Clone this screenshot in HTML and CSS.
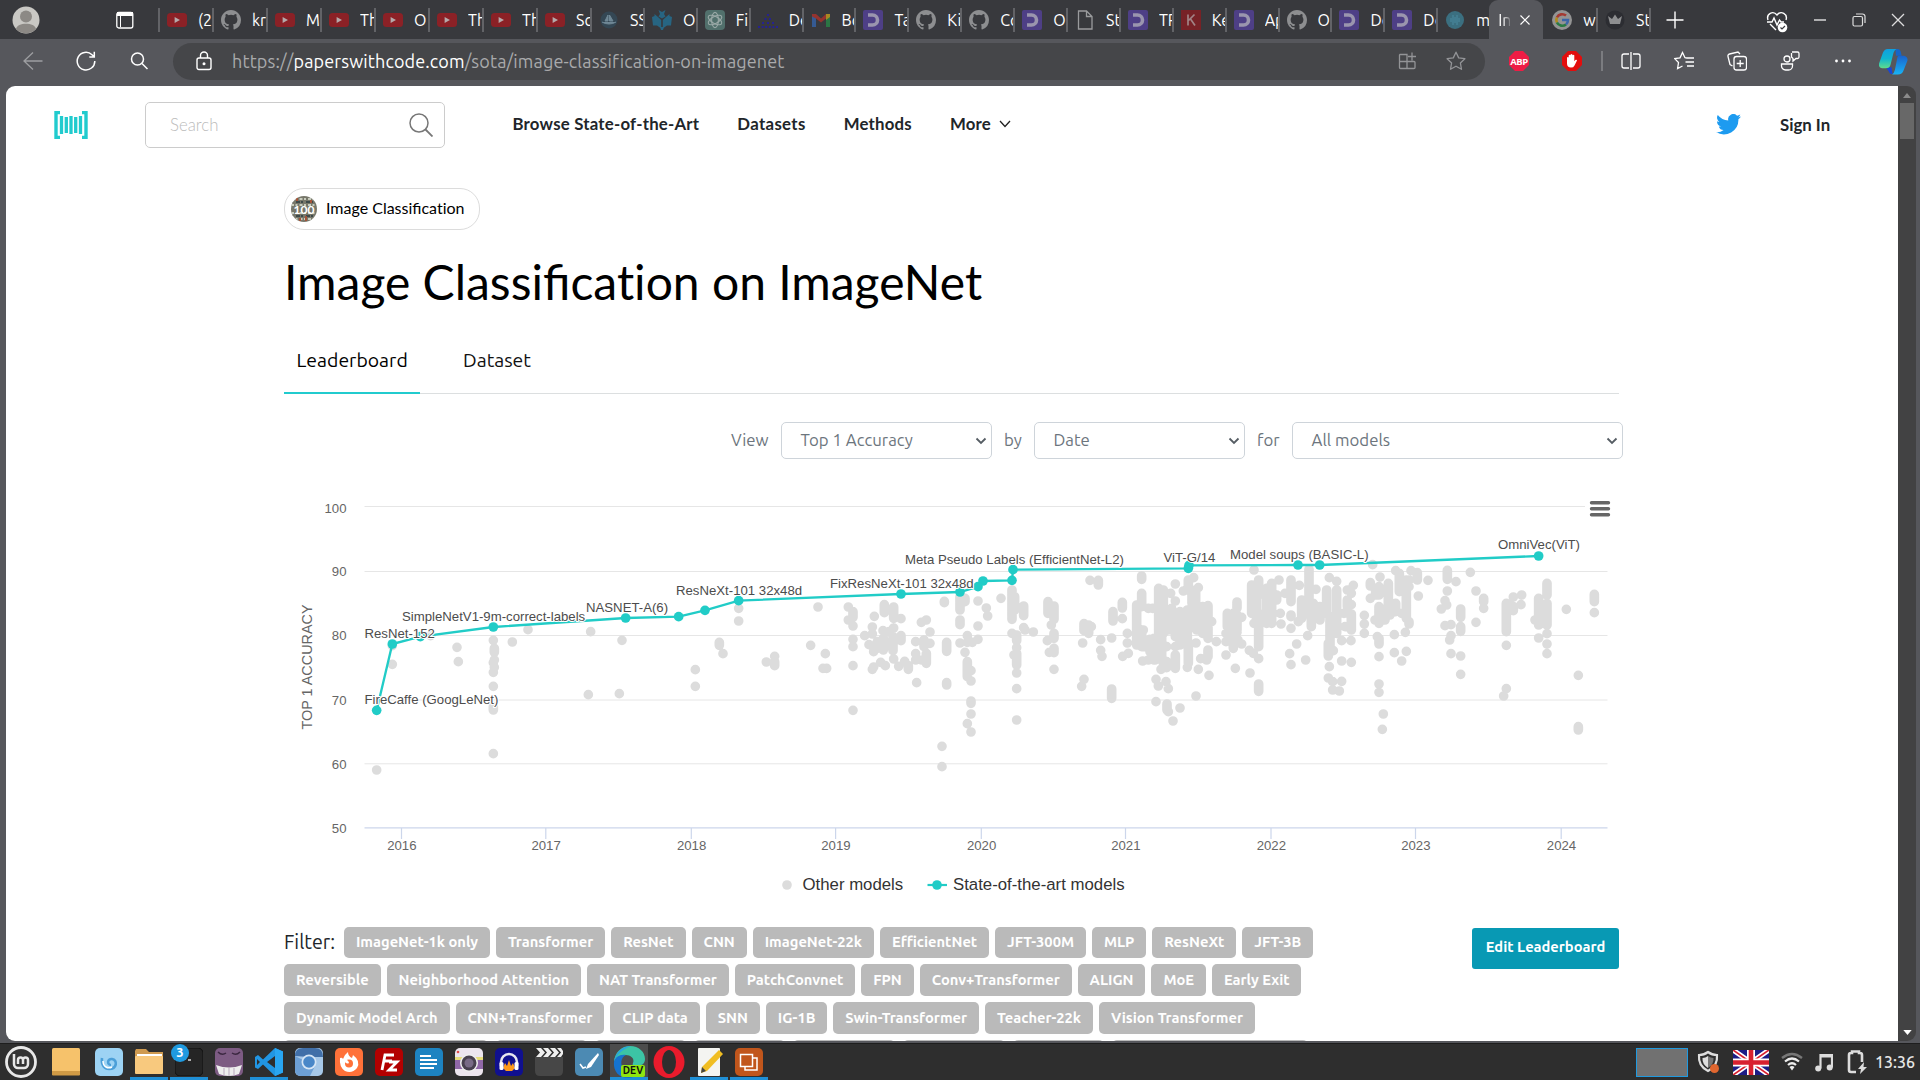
FILE: index.html
```html
<!DOCTYPE html>
<html lang="en">
<head>
<meta charset="utf-8">
<title>Image Classification on ImageNet</title>
<link rel="stylesheet" href="styles.css">
</head>
<body>
<svg class="defs" width="0" height="0">
  <symbol id="yt" viewBox="0 0 20 20"><rect y="3" width="20" height="14" rx="3.5" fill="#8b2126"/><path d="M7.6 7v6l5.4-3z" fill="#b5a9aa"/></symbol>
  <symbol id="gh" viewBox="0 0 16 16"><path fill="#8d8e90" d="M8 0C3.58 0 0 3.58 0 8c0 3.54 2.29 6.53 5.47 7.59.4.07.55-.17.55-.38 0-.19-.01-.82-.01-1.49-2.01.37-2.53-.49-2.69-.94-.09-.23-.48-.94-.82-1.13-.28-.15-.68-.52-.01-.53.63-.01 1.08.58 1.23.82.72 1.21 1.87.87 2.33.66.07-.52.28-.87.51-1.07-1.78-.2-3.64-.89-3.64-3.95 0-.87.31-1.59.82-2.15-.08-.2-.36-1.02.08-2.12 0 0 .67-.21 2.2.82a7.6 7.6 0 0 1 4 0c1.53-1.04 2.2-.82 2.2-.82.44 1.1.16 1.92.08 2.12.51.56.82 1.27.82 2.15 0 3.07-1.87 3.75-3.65 3.95.29.25.54.73.54 1.48 0 1.07-.01 1.93-.01 2.2 0 .21.15.46.55.38A8.01 8.01 0 0 0 16 8c0-4.42-3.58-8-8-8z"/></symbol>
  <symbol id="dd" viewBox="0 0 20 20"><rect width="20" height="20" rx="2" fill="#4e3f86"/><path d="M5 5h4.5a5 5 0 0 1 0 10H5" fill="none" stroke="#9a95ae" stroke-width="3.6"/></symbol>
  <symbol id="ship" viewBox="0 0 20 20"><circle cx="10" cy="10" r="8.500" fill="#344754"/><path d="M3 12q3 2 7 2t7-2M6 11l3-6v6zM10.500 11V5l3.500 6z" fill="#6f8795" stroke="#6f8795"/></symbol>
  <symbol id="book" viewBox="0 0 20 20"><path d="M0 7l2.500-1v-2L6 7l3.200 3v8.500L5 15.500H1zM20 7l-2.500-1v-2L14 7l-3.200 3v8.500l4.200-3h4z" fill="#276582"/><path d="M6.500 0l3.500 2 3.500-2-1.500 4 1.500 2.500L10 8.500 6.500 6.500 8 4zM8 17h4l-1 3H9z" fill="#276582"/></symbol>
  <symbol id="gpt" viewBox="0 0 20 20"><rect width="20" height="20" rx="4" fill="#51706c"/><g fill="none" stroke="#9aa9a7" stroke-width="1.1"><ellipse cx="10" cy="10" rx="3.400" ry="7.600"/><ellipse cx="10" cy="10" rx="3.400" ry="7.600" transform="rotate(60 10 10)"/><ellipse cx="10" cy="10" rx="3.400" ry="7.600" transform="rotate(120 10 10)"/></g></symbol>
  <symbol id="dots3" viewBox="0 0 20 20"><g fill="#252290"><path d="M9 4h2v2H9zM6.500 8h2v2h-2zM11 8h2v2h-2zM4 12h2v2H4zM9 12h2v2H9zM14 12h2v2h-2zM0 16h2v2H0zM3.600 16h2v2h-2zM7.200 16h2v2h-2zM10.800 16h2v2h-2zM14.400 16h2v2h-2zM18 16h2v2h-2z"/></g></symbol>
  <symbol id="gmail" viewBox="0 0 20 20"><path d="M1 4v13h4V8z" fill="#355a92"/><path d="M19 4v13h-4V8z" fill="#2b7544"/><path d="M1 4l4 0 5 4.500L15 4v4.500l-5 4-5-4-4-2z" fill="#95332e"/><path d="M15 4h4v3l-4 3z" fill="#a88922"/></symbol>
  <symbol id="page" viewBox="0 0 20 20"><path d="M3.500 1h8L17 6.500V19H3.500zM11.500 1v5.500H17" fill="none" stroke="#9a9b9d" stroke-width="1.3"/></symbol>
  <symbol id="kk" viewBox="0 0 20 20"><rect width="20" height="20" fill="#772226"/><path d="M7 4.500v11M13.500 4.500L7 11M9.500 9l4.500 6.500" fill="none" stroke="#a18385" stroke-width="1.7"/></symbol>
  <symbol id="teal" viewBox="0 0 20 20"><circle cx="10" cy="10" r="9" fill="#3b6f80"/><path d="M6 8v4M8 5v10M10 7v6M12 5v10M14 8v4" stroke="#4b8ba0" stroke-width="1"/></symbol>
  <symbol id="goog" viewBox="0 0 20 20"><circle cx="10" cy="10" r="10" fill="#949494"/><g fill="none" stroke-width="2.600"><path d="M4.900 7.500A6 6 0 0 1 14 5.600" stroke="#a43a32"/><path d="M4.900 12.500a6 6 0 0 1 0-5" stroke="#b08a1c"/><path d="M14 14.400a6 6 0 0 1-9.100-1.900" stroke="#2a7a43"/><path d="M10 10h6a6 6 0 0 1-2 4.400" stroke="#3c66a8"/></g></symbol>
  <symbol id="crown" viewBox="0 0 20 20"><circle cx="10" cy="10" r="9.500" fill="#2c2d32"/><path d="M3 6l4 3 3-4.500L13 9l4-3-2 8H5z" fill="#8d8e90"/></symbol>
</svg>

<header class="tabstrip">
  <svg class="avatar" viewBox="0 0 28 28"><circle cx="14" cy="14" r="13.500" fill="#c9c8c4"/><circle cx="14" cy="10.500" r="6" fill="#8c8985"/><path d="M4 23c1-7 19-7 20 0a13.500 13.500 0 0 1-20 0z" fill="#8c8985"/></svg>
  <svg class="workspace-btn" viewBox="0 0 18 18"><rect x=".8" y="1.500" width="16" height="15.500" rx="2" fill="none" stroke="#fff" stroke-width="1.300"/><path d="M1 1h16v4H1z" fill="#fff"/><path d="M4.500 5v11" stroke="#fff"/></svg>
  <nav class="tabs">
    <div class="tab"><svg><use href="#yt"/></svg><span>(2</span></div>
    <div class="tab"><svg><use href="#gh"/></svg><span>kr</span></div>
    <div class="tab"><svg><use href="#yt"/></svg><span>M</span></div>
    <div class="tab"><svg><use href="#yt"/></svg><span>Th</span></div>
    <div class="tab"><svg><use href="#yt"/></svg><span>O</span></div>
    <div class="tab"><svg><use href="#yt"/></svg><span>Th</span></div>
    <div class="tab"><svg><use href="#yt"/></svg><span>Th</span></div>
    <div class="tab"><svg><use href="#yt"/></svg><span>Sc</span></div>
    <div class="tab"><svg><use href="#ship"/></svg><span>SS</span></div>
    <div class="tab"><svg><use href="#book"/></svg><span>O</span></div>
    <div class="tab"><svg><use href="#gpt"/></svg><span>Fi</span></div>
    <div class="tab"><svg><use href="#dots3"/></svg><span>De</span></div>
    <div class="tab"><svg><use href="#gmail"/></svg><span>Bo</span></div>
    <div class="tab"><svg><use href="#dd"/></svg><span>Ta</span></div>
    <div class="tab"><svg><use href="#gh"/></svg><span>Ki</span></div>
    <div class="tab"><svg><use href="#gh"/></svg><span>Co</span></div>
    <div class="tab"><svg><use href="#dd"/></svg><span>O</span></div>
    <div class="tab"><svg><use href="#page"/></svg><span>St</span></div>
    <div class="tab"><svg><use href="#dd"/></svg><span>TR</span></div>
    <div class="tab"><svg><use href="#kk"/></svg><span>Ke</span></div>
    <div class="tab"><svg><use href="#dd"/></svg><span>Ap</span></div>
    <div class="tab"><svg><use href="#gh"/></svg><span>O</span></div>
    <div class="tab"><svg><use href="#dd"/></svg><span>De</span></div>
    <div class="tab"><svg><use href="#dd"/></svg><span>De</span></div>
    <div class="tab"><svg><use href="#teal"/></svg><span>m</span></div>
    <div class="tab active"><span>In</span><svg viewBox="0 0 12 12"><path d="M1.500 1.500l9 9M10.500 1.500l-9 9" stroke="#fff" stroke-width="1.200"/></svg></div>
    <div class="tab"><svg><use href="#goog"/></svg><span>w</span></div>
    <div class="tab"><svg><use href="#crown"/></svg><span>St</span></div>
  </nav>
  <svg class="plus" viewBox="0 0 18 18"><path d="M9 .5v17M.5 9h17" stroke="#fff" stroke-width="1.400"/></svg>
  <svg class="heart" viewBox="0 0 22 22"><path d="M2 9C0 3 7-1 11 4c4-5 11-1 9 5M1 11h5l2-4 3 7 2.500-5 1.500 2h3M4 13l6 6" fill="none" stroke="#fff" stroke-width="1.400"/><circle cx="16.500" cy="16.500" r="4.800" fill="#fff"/><path d="M14.500 16.500l1.500 1.500 3-3" fill="none" stroke="#38393d" stroke-width="1.200"/></svg>
  <div class="winbtns">
    <svg viewBox="0 0 14 14"><path d="M1 7h12" stroke="#fff" stroke-width="1.200"/></svg>
    <svg viewBox="0 0 14 14"><rect x="1" y="3.500" width="9.500" height="9.500" rx="1.500" fill="none" stroke="#ddd" stroke-width="1.200"/><path d="M4 1h6.500A2.500 2.500 0 0 1 13 3.500V10" fill="none" stroke="#ddd" stroke-width="1.200"/></svg>
    <svg viewBox="0 0 14 14"><path d="M1 1l12 12M13 1L1 13" stroke="#ddd" stroke-width="1.300"/></svg>
  </div>
</header>

<div class="toolbar">
  <div class="tb"><svg viewBox="0 0 20 20"><path d="M19.500 10H1M10 1.500L1 10l9 8.500" fill="none" stroke="#9d9ea1" stroke-width="1.300"/></svg></div>
  <div class="tb"><svg viewBox="0 0 20 20"><path d="M18.800 10A8.800 8.800 0 1 1 16 3.700l2 2M18.300.8v5.200h-5" fill="none" stroke="#fff" stroke-width="1.500"/></svg></div>
  <div class="tb"><svg viewBox="0 0 20 20"><circle cx="8.500" cy="8" r="6" fill="none" stroke="#fff" stroke-width="1.500"/><path d="M13 12.500l5.500 5.500" stroke="#fff" stroke-width="1.500"/></svg></div>
  <div class="address">
    <svg class="lock" viewBox="0 0 16 20"><rect x="1" y="7" width="14" height="11.500" rx="2" fill="none" stroke="#fff" stroke-width="1.400"/><path d="M4.500 7V4.500a3.500 3.500 0 0 1 7 0V7" fill="none" stroke="#fff" stroke-width="1.400"/><circle cx="8" cy="12.700" r="1.500" fill="#fff"/></svg>
    <div class="url">https://<b>paperswithcode.com</b>/sota/image-classification-on-imagenet</div>
    <svg class="ai" viewBox="0 0 20 20"><path d="M2 3.500h7v14H2.500a1 1 0 0 1-1-1V4zM1.500 10.500h14.500a1 1 0 0 1 1 1v5a1 1 0 0 1-1 1H9M14 1.500v8M10 5.500h8" fill="none" stroke="#939497" stroke-width="1.300"/></svg>
    <svg class="ai" viewBox="0 0 20 20"><path d="M10 1.200l2.700 5.700 6.200.8-4.500 4.300 1.100 6.300L10 15.200l-5.500 3.100 1.100-6.300L1.100 7.700l6.200-.8z" fill="none" stroke="#939497" stroke-width="1.300" stroke-linejoin="round"/></svg>
  </div>
  <div class="tb"><svg viewBox="0 0 20 20"><path d="M6 0h8l6 6v8l-6 6H6l-6-6V6z" fill="#ee1d45"/><text x="10" y="13.500" text-anchor="middle" class="abp">ABP</text></svg></div>
  <div class="tb"><svg viewBox="0 0 20 20"><path d="M6 0h8l6 6v8l-6 6H6l-6-6V6z" fill="#e30d0d"/><path d="M5 10.500V6.500q.9-1 1.700 0V4.300q.9-1 1.800 0V3.500q1-1 1.900 0v.8q1-1 1.900 0v6l1.400-1.500q1.200-.4 1.300.6l-2.500 5q-1 2.200-3.500 2.200-4 0-4-4z" fill="#fff"/></svg></div>
  <i class="sep"></i>
  <div class="tb"><svg viewBox="0 0 20 20"><path d="M8 3H3a2 2 0 0 0-2 2v10a2 2 0 0 0 2 2h5M12 3h5a2 2 0 0 1 2 2v10a2 2 0 0 1-2 2h-5M10 1v18" fill="none" stroke="#fff" stroke-width="1.300"/></svg></div>
  <div class="tb"><svg viewBox="0 0 20 20"><path d="M13 7l-2-.3L8.500 1.500 6 6.800l-5.300.8L4.500 11.500l-.9 6L8.500 15M12 7h8M11.500 11H20M13 15h7" fill="none" stroke="#fff" stroke-width="1.300"/></svg></div>
  <div class="tb"><svg viewBox="0 0 20 20"><rect x="7" y="5.500" width="12.500" height="13.500" rx="2.500" fill="none" stroke="#fff" stroke-width="1.300"/><path d="M13.200 9v7M9.700 12.500h7M5.500 15L3 13.500 1 5.500a2 2 0 0 1 1.500-2.500L11 1l2 2" fill="none" stroke="#fff" stroke-width="1.300"/></svg></div>
  <div class="tb"><svg viewBox="0 0 20 20"><circle cx="7" cy="8" r="3" fill="none" stroke="#fff" stroke-width="1.300"/><path d="M1.500 13h11v2a4 4 0 0 1-4 4h-3a4 4 0 0 1-4-4zM12 1h5.500a1.500 1.500 0 0 1 1.500 1.500V6a1.500 1.500 0 0 1-1.500 1.500H16L13 10V7.500L11.500 6V2" fill="none" stroke="#fff" stroke-width="1.300"/></svg></div>
  <div class="tb"><svg viewBox="0 0 20 20"><circle cx="3.500" cy="10" r="1.400" fill="#fff"/><circle cx="10" cy="10" r="1.400" fill="#fff"/><circle cx="16.500" cy="10" r="1.400" fill="#fff"/></svg></div>
  <div class="tb copilot"><svg viewBox="0 0 30 28">
    <defs><linearGradient id="cg" x1="0" y1="0" x2="0" y2="1"><stop offset="0" stop-color="#0f9fe0"/><stop offset=".5" stop-color="#0fb5d0"/><stop offset="1" stop-color="#5fdc8b"/></linearGradient><linearGradient id="cb" x1="0" y1="0" x2="0" y2="1"><stop offset="0" stop-color="#1a62cc"/><stop offset="1" stop-color="#18b4f5"/></linearGradient></defs>
    <path d="M17 1h2q3 0 3.500 3l1 4h-6z" fill="#1565c8"/><path d="M7 20h6l1 7q-3 0-4-3z" fill="#1946d6"/>
    <path d="M9 1h9q-2 1-3 4l-3 12q-1 4-5 4H3q-4-1-3-5L4 5q1.500-4 5-4z" fill="url(#cg)"/><path d="M20 8h6q4 1 3.500 5l-4 10q-1.500 4.500-6 4.500h-6q2-1 3-5l2-10q.5-4 1.500-4.500z" fill="url(#cb)"/></svg></div>
</div>

<div class="viewport">
  <main class="page">
    <div class="topnav">
      <svg class="logo" viewBox="0 0 34 28"><path d="M6 1.500H2v25h4M28 1.500h4v25h-4" fill="none" stroke="#21cbce" stroke-width="3.400"/><path d="M7.500 5v18M12.300 6v16M17 5v18M21.700 6v16M26.500 5v18" stroke="#21cbce" stroke-width="3.300"/></svg>
      <div class="search"><span>Search</span><svg viewBox="0 0 24 24"><circle cx="10" cy="10" r="9" fill="none" stroke="#777" stroke-width="1.500"/><path d="M16.500 16.500l7 7" stroke="#777" stroke-width="1.800"/></svg></div>
      <nav class="links"><a>Browse State-of-the-Art</a><a>Datasets</a><a>Methods</a><a>More<svg viewBox="0 0 12 8"><path d="M1 1l5 5.500L11 1" fill="none" stroke="#222" stroke-width="1.300"/></svg></a></nav>
      <svg class="twitter" viewBox="0 0 24 20"><path fill="#1d9bf0" d="M24 2.400a9.800 9.800 0 0 1-2.800.8A4.900 4.900 0 0 0 23.300.4a9.900 9.900 0 0 1-3.100 1.200 4.900 4.900 0 0 0-8.400 4.500A14 14 0 0 1 1.700.9a4.900 4.900 0 0 0 1.500 6.600 4.900 4.900 0 0 1-2.200-.6A4.900 4.900 0 0 0 4.900 11.800a5 5 0 0 1-2.200.1 4.900 4.900 0 0 0 4.600 3.400A9.900 9.900 0 0 1 0 17.300 14 14 0 0 0 21.500 4.900 10 10 0 0 0 24 2.400z"/></svg>
      <a class="signin">Sign In</a>
    </div>

    <div class="content">
      <a class="task-pill"><svg viewBox="0 0 26 26"><clipPath id="pc"><circle cx="13" cy="13" r="13"/></clipPath><g clip-path="url(#pc)"><rect width="26" height="26" fill="#77776a"/><path d="M0 3h26M0 9h26M0 17h26M0 23h26" stroke="#c8ccbd" stroke-width="2.200" stroke-dasharray="3 1.500 2 2"/><path d="M0 6h26M0 20h26" stroke="#3e4a4a" stroke-width="2" stroke-dasharray="2 3 4 1"/><path d="M6 1v4M15 20v5M20 4v3M9 22v3" stroke="#a55338" stroke-width="2"/><text x="13" y="17.500" text-anchor="middle" class="hundred">100</text></g></svg><span>Image Classificat&zwnj;ion</span></a>
      <h1>Image Classificat&zwnj;ion on ImageNet</h1>
      <div class="view-tabs"><a class="on">Leaderboard</a><a>Dataset</a></div>
      <div class="controls">
        <label>View</label><div class="select">Top 1 Accuracy<svg viewBox="0 0 12 8"><path d="M1.500 1.500L6 6l4.500-4.500"/></svg></div>
        <label>by</label><div class="select">Date<svg viewBox="0 0 12 8"><path d="M1.500 1.500L6 6l4.500-4.500"/></svg></div>
        <label>for</label><div class="select wide">All models<svg viewBox="0 0 12 8"><path d="M1.500 1.500L6 6l4.500-4.500"/></svg></div>
      </div>
      <svg id="chart" class="chart" width="1350" height="430" viewBox="4 0 1350 430"></svg>
      <div class="bottom">
        <div class="filters">
          <div class="row r1"><span class="lead">Filter:</span><b>ImageNet-1k only</b><b>Transformer</b><b>ResNet</b><b>CNN</b><b>ImageNet-22k</b><b>EfficientNet</b><b>JFT-300M</b><b>MLP</b><b>ResNeXt</b><b>JFT-3B</b></div>
          <div class="row r2"><b>Reversible</b><b>Neighborhood Attention</b><b>NAT Transformer</b><b>PatchConvnet</b><b>FPN</b><b>Conv+Transformer</b><b>ALIGN</b><b>MoE</b><b>Early Exit</b></div>
          <div class="row r3"><b>Dynamic Model Arch</b><b>CNN+Transformer</b><b>CLIP data</b><b>SNN</b><b>IG-1B</b><b>Swin-Transformer</b><b>Teacher-22k</b><b>Vision Transformer</b></div>
          <div class="row r4"><i></i><i></i><i></i><i></i><i></i><i></i><i></i><i></i></div>
        </div>
        <a class="edit">Edit Leaderboard</a>
      </div>
    </div>
  </main>
  <aside class="scrollbar"><svg viewBox="0 0 10 6"><path d="M0 6L5 0l5 6z" fill="#8b8b8b"/></svg><div class="thumb"></div><svg class="down" viewBox="0 0 10 6"><path d="M0 0l5 6 5-6z" fill="#fff"/></svg></aside>
</div>

<footer class="taskbar">
  <div class="app mint"><svg viewBox="0 0 32 32"><circle cx="16" cy="16" r="14.500" fill="#333" stroke="#e8e8e8" stroke-width="2.800"/><path d="M9 8v10a4 4 0 0 0 4 4h6a4 4 0 0 0 4-4v-4a2.500 2.500 0 0 0-5 0v4M18 14a2.500 2.500 0 0 0-5 0v4" fill="none" stroke="#e8e8e8" stroke-width="2.500"/></svg></div>
  <div class="app first"><svg viewBox="0 0 28 28"><rect width="28" height="27" rx="1.500" fill="#f6c26b"/><path d="M0 23h28v3.500q0 1-1 1H1q-1 0-1-1z" fill="#d09a45"/></svg></div>
  <div class="app gap"><svg viewBox="0 0 28 28"><rect width="28" height="28" rx="5" fill="#9dd3f4"/><path d="M7 10c-1 8 3 11 7 11 8 0 9-9 3-10-5-.5-5 6-1 6" fill="none" stroke="#4b9fd8" stroke-width="2.600"/><path d="M8 13c0 6 5 8 9 6" fill="none" stroke="#fff" stroke-width="1.500"/></svg></div>
  <div class="app run"><svg viewBox="0 0 28 28"><path d="M0 3l1-2h10l3 3h14v8H0z" fill="#cf9a50"/><rect x="2" y="6" width="25" height="6" fill="#fff"/><rect y="8" width="28" height="18" rx="1" fill="#f8c97e"/></svg></div>
  <div class="app run badge"><svg viewBox="0 0 28 28"><rect width="28" height="28" rx="5" fill="#252525" stroke="#111"/><path d="M13 12h3" stroke="#ddd" stroke-width="1.500"/></svg><em>3</em></div>
  <div class="app"><svg viewBox="0 0 28 28"><rect width="28" height="28" rx="5" fill="#7d5b83"/><path d="M1 17q13 5 26 0l-3 9q-10 4-20 0z" fill="#eee"/><path d="M9 20v7M14 20v8M19 20v7" stroke="#b9a9bd" stroke-width="1"/><path d="M3 4q4 4 8 1M25 4q-4 4-8 1" fill="none" stroke="#3b2740" stroke-width="1.500"/></svg></div>
  <div class="app run"><svg viewBox="0 0 28 28"><path d="M20 0l8 3.500v21L20 28 8 16.500 3 21l-3-1.500V9L3 7l5 4.500z" fill="#2196e3"/><path d="M20 8v12l-8-6zM2 11l3 3-3 3z" fill="#2e2e2e"/><path d="M20 0l8 3.500v21L20 28z" fill="#29a6f2"/></svg></div>
  <div class="app"><svg viewBox="0 0 28 28"><rect width="28" height="28" rx="5" fill="#a7c8e8"/><path d="M0 8Q0 0 8 0h12q8 0 8 9H14z" fill="#416fa8"/><path d="M0 8v15q1 5 6 5h9l5-10z" fill="#6d9fd4"/><circle cx="14" cy="14" r="7.500" fill="#d7e6f5"/><circle cx="14" cy="14" r="5.800" fill="#4987c8"/></svg></div>
  <div class="app"><svg viewBox="0 0 28 28"><rect width="28" height="28" rx="5" fill="#ff7139"/><path d="M5 10q2-1 3 1 1-4 5-7 0 4 4 6l1-3q8 6 4 13-5 6-12 3-6-4-5-13z" fill="#fff"/><circle cx="14" cy="15.500" r="4" fill="#ff7139"/><path d="M9 12q4-1 5 3-3 2-5-3z" fill="#fff"/></svg></div>
  <div class="app"><svg viewBox="0 0 28 28"><rect width="28" height="28" rx="5" fill="#b30000"/><path d="M7 22l3-15h9M9 13h8M14 14h8l-8 8h8" fill="none" stroke="#fff" stroke-width="2.800"/></svg></div>
  <div class="app"><svg viewBox="0 0 28 28"><rect width="28" height="28" rx="5" fill="#1d83c1"/><path d="M5 8h11M5 12h17M5 16h17M5 20h14" stroke="#fff" stroke-width="2"/></svg></div>
  <div class="app"><svg viewBox="0 0 28 28"><rect width="28" height="28" rx="5" fill="#ece5ee"/><path d="M0 9h28v3H0z" fill="#e5dc7a"/><path d="M0 12h28v9H0z" fill="#9068a8"/><circle cx="14" cy="15" r="9" fill="#eee"/><circle cx="14" cy="15" r="7.500" fill="#48404f"/><circle cx="14" cy="15" r="4.500" fill="#786a86"/><circle cx="3" cy="4" r="1.300" fill="#e04c4c"/></svg></div>
  <div class="app"><svg viewBox="0 0 28 28"><rect width="28" height="28" rx="5" fill="#10108f"/><path d="M6 18V14a8 8 0 0 1 16 0v4" fill="none" stroke="#e6e6ee" stroke-width="2.500"/><path d="M8 20l2-5 2 3 2-6 2 6 2-3 2 5-3 3h-6z" fill="#ff9a1a"/><rect x="4.500" y="14" width="4" height="8" rx="1.500" fill="#fff"/><rect x="19.500" y="14" width="4" height="8" rx="1.500" fill="#fff"/></svg></div>
  <div class="app"><svg viewBox="0 0 28 28"><path d="M0 9h28v14q0 5-5 5H5q-5 0-5-5z" fill="#474747"/><path d="M1 0h5l4 4.500L6 9H1l4-4.500zM8 0h5l4 4.500L13 9H8l4-4.500zM15 0h5l4 4.500L20 9h-5l4-4.500zM22 0h4l2 3v3l-2 3h-4l4-4.500z" fill="#eee"/></svg></div>
  <div class="app"><svg viewBox="0 0 28 28"><rect width="28" height="28" rx="5" fill="#4c8ab3"/><path d="M23 5L13 16l-2 5 5-2 8-12z" fill="#fff"/><path d="M5 16l3 4 3-1" fill="none" stroke="#fff" stroke-width="1.500"/></svg></div>
  <div class="app run focus"><svg viewBox="0 0 32 32"><path d="M1 17C1 6 9 0 17 0c9 0 15 6 15 13 0 5-4 7-8 7s-5-1-4-3c2-5-3-8-7-8C7 9 2 12 1 17z" fill="#3cc4a5"/><path d="M1 16c1-5 6-8 12-7-5 2-7 10-1 16 4 3 8 4 12 3-3 3-6 4-9 4C6 32 0 25 1 16z" fill="#1573cf"/><path d="M1 15C3 5 11 0 18 0 8 4 4 9 1 15z" fill="#2aa5e0"/></svg><em>DEV</em></div>
  <div class="app"><svg viewBox="0 0 32 32"><ellipse cx="16" cy="16" rx="15.500" ry="16" fill="#ea1b2c"/><ellipse cx="16" cy="16" rx="7" ry="12" fill="#2e2e2e"/></svg></div>
  <div class="app run"><svg viewBox="0 0 28 28"><rect x="3" width="22" height="28" rx="1" fill="#f4f4f1"/><path d="M24 2l4 4L12 23l-6 2 1-6z" fill="#f0bd22"/><path d="M7 19l4 4-5 2z" fill="#444"/></svg></div>
  <div class="app run"><svg viewBox="0 0 28 28"><rect width="28" height="28" rx="5" fill="#c1561c"/><rect x="5.500" y="6.500" width="12" height="12" fill="none" stroke="#fff" stroke-width="1.500"/><path d="M18 10h4v12H10v-3" fill="none" stroke="#fff" stroke-width="1.500"/></svg></div>
  <div class="tray">
    <i class="desk"></i>
    <svg class="t-shield" viewBox="0 0 24 24"><path d="M12 2q4 3 9 3 1 11-9 16Q2 16 3 5q5 0 9-3z" fill="none" stroke="#ddd" stroke-width="2.200"/><path d="M12 6v12Q6 14 6.500 8q3 0 5.500-2z" fill="#ddd"/><path d="M12 6v12q6-4 5.500-10-3 0-5.500-2z" fill="#777"/><circle cx="18.500" cy="18.500" r="4.500" fill="#e0662f"/></svg>
    <svg class="t-flag" viewBox="0 0 36 25"><rect width="36" height="25" fill="#1c1c86"/><path d="M0 0l36 25M36 0L0 25" stroke="#fff" stroke-width="5"/><path d="M0 0l36 25M36 0L0 25" stroke="#d8202f" stroke-width="1.700"/><path d="M18 0v25M0 12.500h36" stroke="#fff" stroke-width="8"/><path d="M18 0v25M0 12.500h36" stroke="#d8202f" stroke-width="4.600"/></svg>
    <svg class="t-wifi" viewBox="0 0 22 20"><path d="M1 6q10-8 20 0" fill="none" stroke="#777" stroke-width="2.400"/><path d="M4 9.500q7-6 14 0M7 13q4-3.500 8 0" fill="none" stroke="#eee" stroke-width="2.200"/><path d="M8.500 15q2.500-2 5 0L11 18.500z" fill="#eee"/></svg>
    <svg class="t-music" viewBox="0 0 18 18"><path d="M5.500 15V1.500h11.500V14M5 3h12" fill="none" stroke="#ddd" stroke-width="2.200"/><circle cx="3.200" cy="15" r="3" fill="#ddd"/><circle cx="14.700" cy="14" r="3" fill="#ddd"/></svg>
    <svg class="t-batt" viewBox="0 0 20 24"><path d="M9 22H4q-2 0-2-2V5q0-2 2-2h1V1.500h7V3h1q2 0 2 2v7" fill="none" stroke="#ddd" stroke-width="2.600"/><path d="M17 12l-6 7h3l-1 5 7-7h-3.500z" fill="#ddd"/></svg>
    <span class="clock">13:36</span>
  </div>
</footer>
<script src="chart.js"></script>
</body>
</html>
```
FILE: styles.css
```css
* { box-sizing: border-box; }
body { margin: 0; width: 1920px; height: 1080px; overflow: hidden; display: flex; flex-direction: column; background: #56575c; font-family: Ubuntu, "Noto Sans", sans-serif; }
.defs { display: none; }
svg { display: block; flex: none; }

.tabstrip { height: 39px; flex: none; display: flex; align-items: center; background: #38393d; }
.avatar { width: 28px; height: 28px; margin-left: 12px; }
.workspace-btn { width: 18px; height: 18px; margin-left: 76px; }
.tabs { display: flex; margin-left: 24px; align-self: stretch; align-items: center; }
.tab { flex: none; width: 52.900px; height: 24px; display: flex; align-items: center; padding-left: 7px; gap: 11px; border-left: 2px solid #626367; color: #fff; font-size: 16px; }
.tab:nth-child(-n+8) { width: 54px; }
.tab svg { width: 20px; height: 20px; }
.tab span { flex: 1; overflow: hidden; white-space: nowrap; line-height: 24px; }
.tab:last-child { border-right: 2px solid #626367; width: 55px; }
.tab.active { width: 54px; height: 39px; background: #56575c; border: 0; border-radius: 9px 9px 0 0; gap: 8px; padding-left: 9px; padding-right: 13px; }
.tab.active + .tab { border-color: transparent; }
.tab.active span { flex: none; width: 12px; -webkit-mask-image: linear-gradient(90deg, #000 40%, rgba(0,0,0,.2)); mask-image: linear-gradient(90deg, #000 40%, rgba(0,0,0,.2)); }
.tab.active svg { width: 12px; height: 12px; margin-left: 1px; }
.plus { width: 18px; height: 18px; margin-left: 15px; }
.heart { width: 22px; height: 22px; margin-left: 82px; margin-top: 4px; }
.winbtns { display: flex; gap: 25px; margin-left: 25px; }
.winbtns svg { width: 14px; height: 14px; }

.toolbar { height: 47px; flex: none; display: flex; align-items: center; padding: 0 0 3px 6.5px; }
.tb { width: 53px; display: flex; justify-content: center; }
.tb svg { width: 20px; height: 20px; }
.tb.copilot { width: 47px; }
.tb.copilot svg { width: 29px; height: 27px; }
.address { width: 1312px; height: 37px; margin: 0 7.5px; border-radius: 19px; background: #454649; display: flex; align-items: center; padding: 0 19px 0 23px; }
.lock { width: 16px; height: 20px; }
.url { flex: 1; margin-left: 20px; color: #a9aaac; font-size: 18px; letter-spacing: .14px; white-space: nowrap; }
.url b { color: #fff; font-weight: 400; }
.ai { width: 20px; height: 20px; margin-left: 28px; }
.sep { width: 2px; height: 20px; background: #7b7c80; margin: 0 1.500px 0 2.500px; }
.abp { font: bold 9.500px "Open Sans", sans-serif; letter-spacing: -.4px; fill: #fff; }

.viewport { height: 955px; flex: none; margin: 0 4px 0 6px; display: flex; border-radius: 9px; overflow: hidden; }
.page { width: 1892px; background: #fff; overflow: hidden; }
.scrollbar { width: 18px; background: #424243; display: flex; flex-direction: column; align-items: center; padding: 7px 0 6px; }
.scrollbar svg { width: 8px; height: 5px; }
.thumb { width: 14px; height: 36px; margin-top: 5px; background: #686868; }
.scrollbar .down { margin-top: auto; width: 9px; }

.topnav { height: 77px; display: flex; align-items: center; padding-left: 48px; font: bold 16.800px Lato, sans-serif; color: #212529; }
.logo { width: 34px; height: 28px; }
.search { width: 300px; height: 46px; margin-left: 57px; border: 1px solid #ccc; border-radius: 5px; display: flex; align-items: center; justify-content: space-between; padding: 0 11px 0 24px; color: #bbb; font-weight: 300; }
.search svg { width: 24px; height: 24px; }
.links { display: flex; gap: 38px; margin: -2px 0 0 67.500px; letter-spacing: .22px; }
.links a { display: flex; align-items: center; white-space: nowrap; }
.links a:nth-child(2) { letter-spacing: .35px; }
.links a svg { width: 12px; height: 8px; margin-left: 7.500px; }
.twitter { width: 25px; height: 21px; margin: -1px 0 0 auto; }
.signin { width: 52px; margin: 0 66px 0 39px; white-space: nowrap; }

.content { padding-left: 278px; display: flex; flex-direction: column; align-items: flex-start; }
.task-pill { margin-top: 25px; width: 196px; height: 42px; border: 1px solid #dcdcdc; border-radius: 20px; display: flex; align-items: center; gap: 9px; padding-left: 6px; font: 16px Lato, sans-serif; color: #000; white-space: nowrap; }
.task-pill span { margin-top: -3px; }
.task-pill svg { width: 26px; height: 26px; }
.hundred { font: bold 12px Lato, sans-serif; fill: #fff; }
h1 { margin: 22px 0 0; font: 400 48px/60px Lato, sans-serif; color: #000; white-space: nowrap; }
.view-tabs { display: flex; width: 1335px; height: 82px; border-bottom: 1px solid #dcdfe0; font-size: 19.400px; color: #111; }
.view-tabs a { height: 82px; padding: 35px 12.500px 0; width: 136px; line-height: 26px; margin-right: 30.500px; }
.view-tabs a.on { border-bottom: 2px solid #21cbce; color: #000; }
.controls { display: flex; align-items: center; height: 37px; margin: 28px 0 0 447px; color: #6c757d; font-size: 16.800px; }
.controls > * { flex: none; }
.controls label { width: 50px; margin-top: -2px; white-space: nowrap; }
.controls label:nth-of-type(2) { width: 42px; padding-left: 12px; }
.controls label:nth-of-type(3) { width: 47px; padding-left: 12px; }
.select { width: 211px; height: 37px; border: 1px solid #ced4da; border-radius: 5px; display: flex; align-items: center; justify-content: space-between; padding: 0 4px 2px 18.500px; }
.select.wide { width: 331px; }
.select svg { width: 12px; height: 8px; margin-top: 2px; fill: none; stroke: #555c63; stroke-width: 1.800; }

.chart { margin-top: 21px; font-family: "Liberation Sans", Arial, sans-serif; }
.grid { stroke: #e6e6e6; stroke-width: 1; }
.axis { stroke: #ccd6eb; stroke-width: 1.200; }
.dots { stroke: #dcdcdc; stroke-width: 29; stroke-linecap: round; fill: none; }
.sota { stroke: #21ccc7; fill: none; }
.knot { fill: #21ccc7; }
.tick { font-size: 13.200px; fill: #666; }
.axis-title { font-size: 14.400px; fill: #666; }
.name { font-size: 13.200px; fill: #4c4c4c; stroke: #fff; stroke-width: 2px; paint-order: stroke; stroke-linejoin: round; }
.legend { font-size: 16.800px; fill: #333; }

.bottom { display: flex; align-items: flex-start; width: 1335px; justify-content: space-between; margin-top: 17px; }
.filters { display: flex; flex-direction: column; gap: 6px; }
.row { display: flex; gap: 6px; white-space: nowrap; }
.row b { height: 32px; line-height: 31px; padding: 0 11.950px; border-radius: 5px; background: #bababa; color: #fff; font-size: 14.700px; font-weight: 700; }
.r1 b { height: 31px; line-height: 30px; }
.lead { font-size: 19.700px; line-height: 31px; width: 54px; color: #212529; }
.row.r4 { gap: 8px; }
.row i { height: 20px; border-radius: 5px; background: #bababa; width: 91px; }
.row i:nth-child(1) { width: 204px; }
.row i:nth-child(5), .row i:nth-child(6) { width: 102px; }
.row i:nth-child(8) { width: 196px; }
.edit { width: 147px; height: 41px; margin-top: 1px; border-radius: 3px; background: #0899b4; color: #fff; font-size: 14.700px; font-weight: 700; line-height: 37px; text-align: center; white-space: nowrap; }

.taskbar { height: 37px; margin-top: auto; flex: none; background: #2e2e2e; border-top: 1px solid #1e1e1e; display: flex; align-items: stretch; }
.app { width: 38px; margin: 0 1px; display: flex; align-items: center; justify-content: center; position: relative; }
.app svg { width: 28px; height: 28px; }
.app.mint { width: 40px; }
.app.mint svg, .app.focus svg, .app:nth-child(17) svg { width: 32px; height: 32px; }
.app.first { margin-left: 5px; }
.app.gap { margin-left: 4px; }
.app.run { border-bottom: 3px solid #1f8fd6; padding-top: 3px; }
.app.focus { background: #4c4c4c; }
.app em { position: absolute; font-style: normal; font-weight: 700; }
.badge em { left: 1px; top: 0; width: 18px; height: 18px; border-radius: 9px; background: #1f9ae0; color: #fff; font-size: 13px; line-height: 17px; text-align: center; }
.focus em { right: 3px; bottom: 0; width: 24px; height: 12px; border-radius: 2px; background: #8fe610; color: #111; font-size: 10px; line-height: 12px; text-align: center; }
.tray { margin-left: auto; display: flex; align-items: center; padding-right: 4px; color: #e6e6e6; }
.desk { width: 52px; height: 29px; background: #717171; border: 1px solid #1f9ae0; }
.t-shield { width: 24px; height: 24px; margin-left: 8px; }
.t-flag { width: 36px; height: 25px; margin-left: 13px; }
.t-wifi { width: 22px; height: 20px; margin-left: 12px; }
.t-music { width: 18px; height: 19px; margin-left: 12px; }
.t-batt { width: 20px; height: 24px; margin-left: 14px; }
.clock { width: 41px; margin: -1px 0 0 8px; font-size: 16px; font-weight: 500; white-space: nowrap; }
```
FILE: chart.js
```js
// Scatter plot: each entry is "x,y" for one model or "x,y1-y2" for a run of models
// that share a date. Units are thirds of a pixel, relative to the block's x.
const blocks = [
  { x: 0, d: "290,870 337,497 337,553 452,467 531,502 535,545 640,481 643,505-517 643,540 640,548 643,562 640,577 640,619 640,680-690 640,821 697,486 744,449 932,455 925,644 1026,481 1018,641 1246,569 1246,619 1318,487-496 1329,521 1376,385 1376,423" },
  { x: 440, d: "139,546 164,529 164,545-557 272,496 294,381 316,521 309,565 320,565 385,381 399,395-412 385,420 399,438 399,478 399,500 399,557 399,691 463,409 457,441 434,467 457,462 447,494 457,568 461,561 461,515 493,374-398 489,452 521,381-415 543,416 521,444 507,455 543,467-482 490,475-510 472,485-505 519,470-512 521,537 536,559 554,544 482,547 496,557 565,557-568 604,427 619,420 630,456 587,485 587,521 587,540 612,480-500 630,490 619,520-550 605,540 590,608 673,364-368 680,487-514 680,608-615 666,799 666,860 720,350-390 720,420-434 720,489 735,355-365 742,467 742,487 757,487 774,478 774,438 774,363 735,517 742,545-590 753,572 753,603 753,663-670 753,702 742,731 753,756 799,384 803,408 843,355 876,330-418 884,350-390 911,378-407 911,443 915,450 940,456 876,460 890,465-482 890,503 882,525 890,520-555 890,579 890,626 890,720 984,365-400 1002,378-418 994,435 1002,460-475 982,482 1002,505-518 988,517 1002,568 1110,301 1135,301-315 1092,431-452 1106,435-460 1114,440 1088,489 1142,479 1142,511 1146,529 1092,598 1085,619 1179,395-423 1175,474 1175,627-655 1207,367-384 1207,416" },
  { x: 820, d: "82,460 82,489 68,529 85,520 125,288-298 125,340-380 110,375-495 125,450-500 130,450 128,543 145,385 158,385 176,325-470 150,478-515 162,475-540 190,330-460 212,340 226,312 226,363 215,385-420 205,400-450 185,465-540 200,500 226,403-470 240,395-480 262,390-480 165,540 145,540 130,500 183,568 190,550 200,545-563 226,525-565 226,500 240,495 265,490-550 262,562 265,520 288,489 168,598 175,618 198,605 205,626 168,665 201,672-690 205,695 219,723 240,684 288,648 295,568 327,586 302,536 320,540 324,510-530 265,300-330 281,293 276,340-370 295,323 287,330-385 250,333 308,380-460 324,377-475 335,425 290,400-450 349,485 378,460 378,525 382,400-440 378,485 411,366-384 400,400-505 411,405-450 425,412 411,457 406,565 425,492 414,480 450,579 462,270 476,300-345 455,315-400 470,330-420 462,430 476,400-500 448,511 460,520 476,536 476,612-634 500,325-430 515,310-430 537,300 530,345-360 520,400 541,400 543,432 573,300-365 555,340 598,316 573,405-410 573,445 569,521 573,554 590,492 617,540 623,467 627,268-400 605,360-415 595,425 634,390-440 648,328 640,370-400 660,380-420 680,330-400 688,293 710,304 690,410-500 710,330-460 700,440 685,490-528 700,512 688,560 725,482 725,543 754,547 685,594 698,605 725,604 698,630 718,633 742,330 760,316 754,340 754,374 754,402-450 742,360-380 735,440 732,400 753,482 793,406 793,432 793,460 818,254" },
  { x: 1060, d: "120,291 91,308-318 91,355 107,330-345 117,320-345 117,380-430 105,420 112,470 117,475-492 117,530 117,612 117,637 130,702 127,748 145,310-400 135,400-420 150,405 167,272 178,280-335 167,370-395 163,464 163,518 185,543 199,514 196,457 199,300-415 207,425-432 207,300 213,272 232,278-300 207,320 264,301 235,348 185,400 322,271-298 348,305 322,333 315,362 320,375 304,387 315,437 333,434 333,467 329,480 333,521 362,387-412 362,440-454 362,528 362,583 391,277 408,333 408,427 431,355-365 431,385 499,370-455 499,496 499,626 491,648 520,351 520,380-392 545,345 543,374 508,375 596,355-435 585,420 596,474 621,310-345 621,370-435 621,461 621,492 621,521 608,375-420 679,388 715,586 715,740-750 763,343-365 763,398" }
];
const sota = [[290,691],[337,492],[421,470],[640,441],[1037,414],[1196,410],[1275,391],[1376,362],[1863,342],[2040,336],[2094,320],[2109,303],[2196,301],[2199,269],[2725,265],[2727,256],[3054,255],[3119,255],[3776,228]];
const names = [["ResNet-152",84.500,158],["SimpleNetV1-9m-correct-labels",122,141],["NASNET-A(6)",306,132],["ResNeXt-101 32x48d",396,115],["FireCaffe (GoogLeNet)",84.500,224],["FixResNeXt-101 32x48d",550,108],["Meta Pseudo Labels (EfficientNet-L2)",625,84],["ViT-G/14",883.500,82],["Model soups (BASIC-L)",950,79],["OmniVec(ViT)",1218,69]];

let s = "";
[[100,26.500],[90,91.500],[80,155.500],[70,220],[60,283.800],[50,347.800]].forEach(([v, y]) => {
  const end = v === 100 ? 1305 : 1327.500;
  s += `<path class="${v === 50 ? "axis" : "grid"}" d="M84.500 ${y}H${end}"/>`;
  s += `<text class="tick" x="66.500" y="${v === 100 ? 33 : Math.floor(y + 5.300)}" text-anchor="end">${v}</text>`;
});
[121.500,265.800,411.300,555.600,701.300,845.500,991,1135.500,1281.200].forEach((x, i) => {
  s += `<path class="axis" d="M${x} 348v11"/><text class="tick" x="${x + .3}" y="370" text-anchor="middle">${2016 + i}</text>`;
});
s += `<text class="axis-title" transform="translate(32 187) rotate(-90)" text-anchor="middle">TOP 1 ACCURACY</text>`;
blocks.forEach(b => {
  const path = b.d.split(" ").map(p => {
    const [x, r] = p.split(",");
    const [y1, y2] = r.split("-");
    return `M${x} ${y1}V${y2 || +y1 + .1}`;
  }).join("");
  s += `<path class="dots" transform="translate(${b.x} 0) scale(.33333)" d="${path}"/>`;
});
s += `<g transform="scale(.33333)"><polyline class="sota" stroke-width="7" points="${sota.map(p => p.join()).join(" ")}"/>`;
s += sota.map(p => `<circle class="knot" cx="${p[0]}" cy="${p[1]}" r="14.500"/>`).join("") + "</g>";
names.forEach(([t, x, y]) => { s += `<text class="name" x="${x}" y="${y}">${t}</text>`; });
s += `<path d="M1311.500 22.800h17M1311.500 28.800h17M1311.500 34.800h17" stroke="#666" stroke-width="3.400" stroke-linecap="round"/>`;
s += `<circle cx="507" cy="405" r="4.800" fill="#dcdcdc"/><text class="legend" x="522.500" y="410">Other models</text>`;
s += `<path class="sota" stroke-width="2.200" d="M647.500 405h19.500"/><circle class="knot" cx="657" cy="405" r="4.800"/><text class="legend" x="673" y="410">State-of-the-art models</text>`;
document.getElementById("chart").innerHTML = s;
```
